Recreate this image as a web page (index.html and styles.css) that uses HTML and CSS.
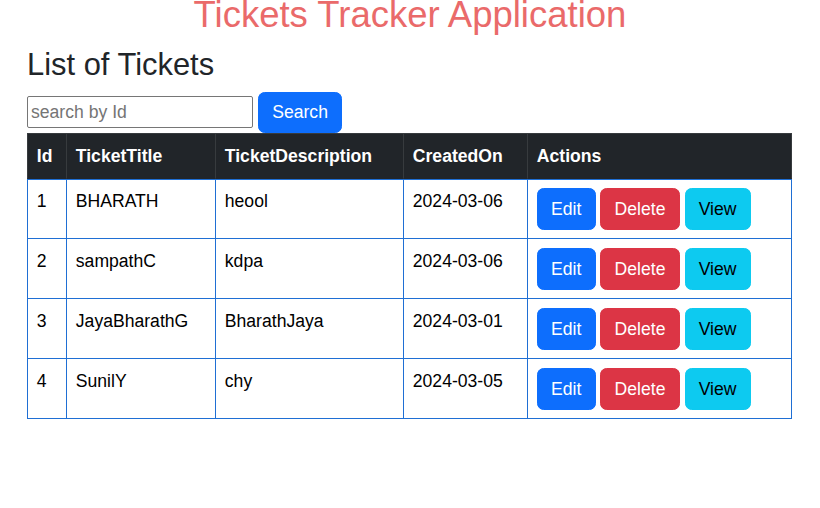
FILE: index.html
```html
<!DOCTYPE html>
<html lang="en">
<head>
<meta charset="utf-8">
<title>Tickets Tracker Application</title>
<link rel="stylesheet" href="styles.css">
</head>
<body>
<h1 class="app-title">Tickets Tracker Application</h1>
<main class="container">
  <h2 class="list-title">List of Tickets</h2>
  <div class="search-row">
    <input class="search-input" type="text" placeholder="search by Id">
    <button class="btn btn-primary">Search</button>
  </div>
  <table class="tickets">
    <colgroup>
      <col class="c-id"><col class="c-title"><col class="c-desc"><col class="c-date"><col class="c-actions">
    </colgroup>
    <thead>
      <tr><th>Id</th><th>TicketTitle</th><th>TicketDescription</th><th>CreatedOn</th><th>Actions</th></tr>
    </thead>
    <tbody>
      <tr><td>1</td><td>BHARATH</td><td>heool</td><td>2024-03-06</td>
        <td><div class="actions"><button class="btn btn-primary">Edit</button><button class="btn btn-danger">Delete</button><button class="btn btn-info">View</button></div></td></tr>
      <tr><td>2</td><td>sampathC</td><td>kdpa</td><td>2024-03-06</td>
        <td><div class="actions"><button class="btn btn-primary">Edit</button><button class="btn btn-danger">Delete</button><button class="btn btn-info">View</button></div></td></tr>
      <tr><td>3</td><td>JayaBharathG</td><td>BharathJaya</td><td>2024-03-01</td>
        <td><div class="actions"><button class="btn btn-primary">Edit</button><button class="btn btn-danger">Delete</button><button class="btn btn-info">View</button></div></td></tr>
      <tr><td>4</td><td>SunilY</td><td>chy</td><td>2024-03-05</td>
        <td><div class="actions"><button class="btn btn-primary">Edit</button><button class="btn btn-danger">Delete</button><button class="btn btn-info">View</button></div></td></tr>
    </tbody>
  </table>
</main>
</body>
</html>
```

FILE: styles.css
```css
* { box-sizing: border-box; }
html, body { margin: 0; padding: 0; background: #fff; }
body {
  font-family: "Liberation Sans", Arial, sans-serif;
  font-size: 17.6px;
  line-height: 1.5;
  color: #212529;
  overflow: hidden;
}
.app-title {
  margin: -7px 0 8.8px;
  font-size: 36.5px;
  font-weight: 400;
  line-height: 1.2;
  text-align: center;
  color: #ea6a6a;
}
.container {
  padding: 0 0 0 27px;
  width: 791px;
}
.list-title {
  margin: 0 0 8.8px;
  font-size: 30.9px;
  font-weight: 400;
  line-height: 1.2;
  height: 37px;
}
.search-row {
  display: flex;
  align-items: center;
  gap: 5px;
  height: 42px;
}
.search-input {
  width: 226px;
  height: 32px;
  padding: 1px 3px;
  border: 1px solid #767676;
  border-radius: 2px;
  font-family: inherit;
  font-size: 17.6px;
  color: #212529;
}
.search-input::placeholder { color: #757575; }
.btn {
  display: inline-block;
  padding: 6.6px 13.2px;
  border: 1px solid transparent;
  border-radius: 6.6px;
  font-family: inherit;
  font-size: 17.6px;
  line-height: 26.4px;
  cursor: pointer;
}
.btn-primary { background: #0d6efd; border-color: #0d6efd; color: #fff; }
.btn-danger { background: #dc3545; border-color: #dc3545; color: #fff; }
.btn-info { background: #0dcaf0; border-color: #0dcaf0; color: #000; }
.tickets {
  width: 765px;
  table-layout: fixed;
  border-collapse: separate;
  border-spacing: 0;
  margin-top: 0;
}
.c-id { width: 40px; }
.c-title { width: 149px; }
.c-desc { width: 188px; }
.c-date { width: 124px; }
.c-actions { width: 264px; }
.tickets th, .tickets td {
  padding: 8.8px;
  text-align: left;
  vertical-align: top;
  line-height: 26.4px;
}
.tickets th {
  background: #212529;
  color: #fff;
  font-weight: 700;
  border-top: 1px solid #373b3e;
  border-bottom: 1px solid #212529;
  border-right: 1px solid #373b3e;
}
.tickets th:first-child { border-left: 1px solid #373b3e; }
.tickets td {
  border-right: 1px solid #1f6fd4;
  border-bottom: 1px solid #1f6fd4;
  color: #000;
  padding-top: 8.8px;
  padding-bottom: 8.6px;
}
.tickets td:first-child { border-left: 1px solid #1f6fd4; }
.tickets tbody tr:first-child td { border-top: 1px solid #1f6fd4; padding-top: 7.8px; }
.actions {
  display: flex;
  gap: 4.9px;
}
```
